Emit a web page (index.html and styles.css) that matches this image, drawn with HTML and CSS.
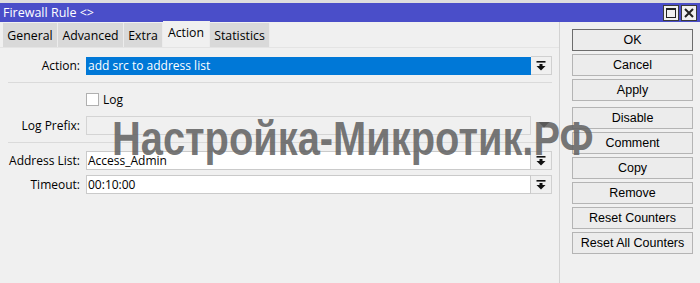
FILE: index.html
```html
<!DOCTYPE html>
<html>
<head>
<meta charset="utf-8">
<link rel="stylesheet" href="styles.css">
</head>
<body>
<div class="window">
  <div class="topstrip"></div>
  <div class="titlebar">
    <span class="title">Firewall Rule &lt;&gt;</span>
    <div class="tbtns">
      <div class="tbtn"><svg width="14" height="14" viewBox="0 0 14 14"><rect x="2.5" y="2.5" width="9" height="9" fill="none" stroke="#222" stroke-width="1"/><rect x="2" y="2" width="10" height="2" fill="#222"/></svg></div>
      <div class="tbtn"><svg width="14" height="14" viewBox="0 0 14 14"><path d="M3 3 L11 11 M11 3 L3 11" stroke="#222" stroke-width="2"/></svg></div>
    </div>
  </div>
  <div class="content">
    <div class="pane">
      <div class="tabs">
        <div class="tab w-general">General</div>
        <div class="tab w-advanced">Advanced</div>
        <div class="tab w-extra">Extra</div>
        <div class="tab active w-action">Action</div>
        <div class="tab w-stats">Statistics</div>
      </div>
      <div class="form">
        <div class="row r-action">
          <div class="label">Action:</div>
          <div class="field selected">add src to address list</div>
          <div class="dd"><svg width="10" height="10" viewBox="0 0 10 10"><rect x="0.5" y="0" width="9" height="1.6" fill="#111"/><rect x="3.5" y="3" width="3" height="2" fill="#111"/><polygon points="0.5,5 9.5,5 5,9.5" fill="#111"/></svg></div>
        </div>
        <div class="sep s1"></div>
        <div class="row r-log">
          <div class="label"></div>
          <div class="check"></div>
          <span class="checktext">Log</span>
        </div>
        <div class="row r-prefix">
          <div class="label">Log Prefix:</div>
          <div class="field disabled"></div>
          <div class="dd plain"><svg width="12" height="6" viewBox="0 0 12 6"><polygon points="0.5,0 11.5,0 6,5.5" fill="#111"/></svg></div>
        </div>
        <div class="sep s2"></div>
        <div class="row r-addr">
          <div class="label">Address List:</div>
          <div class="field">Access_Admin</div>
          <div class="dd"><svg width="10" height="10" viewBox="0 0 10 10"><rect x="0.5" y="0" width="9" height="1.6" fill="#111"/><rect x="3.5" y="3" width="3" height="2" fill="#111"/><polygon points="0.5,5 9.5,5 5,9.5" fill="#111"/></svg></div>
        </div>
        <div class="row r-timeout">
          <div class="label">Timeout:</div>
          <div class="field">00:10:00</div>
          <div class="dd"><svg width="10" height="10" viewBox="0 0 10 10"><rect x="0.5" y="0" width="9" height="1.6" fill="#111"/><rect x="3.5" y="3" width="3" height="2" fill="#111"/><polygon points="0.5,5 9.5,5 5,9.5" fill="#111"/></svg></div>
        </div>
      </div>
    </div>
    <div class="buttons">
      <div class="btn default">OK</div>
      <div class="btn">Cancel</div>
      <div class="btn">Apply</div>
      <div class="btn gap">Disable</div>
      <div class="btn">Comment</div>
      <div class="btn">Copy</div>
      <div class="btn">Remove</div>
      <div class="btn">Reset Counters</div>
      <div class="btn">Reset All Counters</div>
    </div>
  </div>
  <div class="watermark">Настройка-Микротик.РФ</div>
</div>
</body>
</html>
```
FILE: styles.css
```css
html, body {
  margin: 0;
  padding: 0;
}
body {
  width: 700px;
  height: 283px;
  overflow: hidden;
  background: #f0f0f0;
  font-family: "Open Sans", "Liberation Sans", sans-serif;
  font-size: 12px;
  color: #000;
}
.window {
  position: relative;
  width: 700px;
  height: 283px;
  background: #f0f0f0;
}
.topstrip {
  height: 3px;
  background: #dedede;
}
.titlebar {
  height: 19px;
  background: #4a4ec9;
  display: flex;
  align-items: center;
  justify-content: space-between;
}
.title {
  color: #fff;
  padding-left: 3px;
  font-size: 12.5px;
  line-height: 19px;
}
.tbtns {
  display: flex;
  gap: 2px;
  padding-right: 3px;
}
.tbtn {
  width: 14px;
  height: 14px;
  border: 1px solid #3a3a3a;
  background: #f0f0f0;
  display: flex;
  align-items: center;
  justify-content: center;
}
.content {
  display: flex;
}
.pane {
  width: 559px;
  height: 261px;
  border-right: 1px solid #d2d2d2;
}
.tabs {
  display: flex;
  align-items: flex-end;
  height: 26px;
  padding-left: 3px;
  border-bottom: 1px solid #e4e4e4;
  box-sizing: border-box;
}
.tab {
  height: 24px;
  line-height: 25px;
  background: #d9d9d9;
  text-align: center;
  border-right: 1px solid #ececec;
  box-sizing: border-box;
  font-size: 12.3px;
}
.tab.active {
  height: 26px;
  line-height: 24px;
  background: #f0f0f0;
}
.w-general { width: 55px; }
.w-advanced { width: 66px; }
.w-extra { width: 39px; }
.w-action { width: 47px; }
.w-stats { width: 60px; }
.form {
  display: flex;
  flex-direction: column;
}
.row {
  display: flex;
  align-items: center;
}
.label {
  width: 86px;
  padding-right: 6px;
  box-sizing: border-box;
  text-align: right;
  flex: none;
  white-space: nowrap;
}
.field {
  width: 445px;
  height: 19px;
  box-sizing: border-box;
  border: 1px solid #cacaca;
  background: #fff;
  padding-left: 1px;
  line-height: 17px;
  white-space: nowrap;
}
.field.selected {
  height: 18px;
  background: #0078d7;
  border-color: #0078d7;
  color: #fff;
  line-height: 16px;
}
.field.disabled {
  background: #f0f0f0;
  border-color: #d4d4d4;
}
.dd {
  width: 21px;
  height: 19px;
  box-sizing: border-box;
  border: 1px solid #d0d0d0;
  border-left: none;
  background: #f0f0f0;
  display: flex;
  align-items: center;
  justify-content: center;
}
.dd.plain {
  border: none;
  background: transparent;
  align-items: flex-start;
  padding-top: 6px;
  padding-left: 4px;
}
.r-action { margin-top: 8px; height: 19px; }
.r-action .dd { height: 19px; }
.sep {
  margin-left: 8px;
  width: 544px;
  height: 1px;
  background: #dadada;
}
.s1 { margin-top: 7px; }
.r-log { margin-top: 10px; height: 13px; }
.check {
  width: 13px;
  height: 13px;
  box-sizing: border-box;
  border: 1px solid #b0b0b0;
  background: #fff;
}
.checktext {
  padding-left: 4px;
  line-height: 13px;
}
.r-prefix { margin-top: 10px; height: 19px; }
.s2 { margin-top: 7px; }
.r-addr { margin-top: 8px; height: 19px; }
.r-timeout { margin-top: 5px; height: 19px; }
.buttons {
  display: flex;
  flex-direction: column;
  gap: 3px;
  margin-left: 12px;
  padding-top: 7px;
}
.btn {
  width: 121px;
  height: 22px;
  box-sizing: border-box;
  border: 1px solid #b4b4b4;
  background: #ececec;
  text-align: center;
  line-height: 20px;
  font-family: "Liberation Sans", Arial, sans-serif;
  font-size: 12.5px;
}
.btn.default {
  border-color: #6c6c6c;
}
.btn.gap {
  margin-top: 3px;
}
.watermark {
  position: absolute;
  left: 112px;
  top: 111px;
  font-family: "Liberation Sans", Arial, sans-serif;
  font-weight: bold;
  font-size: 48px;
  line-height: 56px;
  color: rgba(100, 100, 100, 0.88);
  white-space: nowrap;
  transform-origin: left top;
  transform: scaleX(0.83);
  pointer-events: none;
}
```
